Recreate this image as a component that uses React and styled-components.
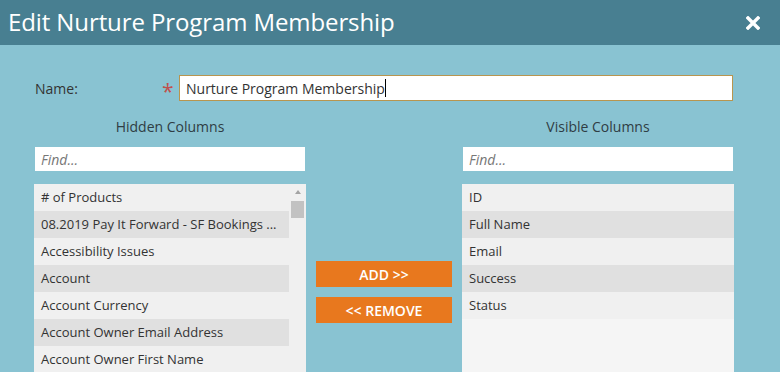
import React from 'react';
import styled, { createGlobalStyle } from 'styled-components';

const GlobalStyle = createGlobalStyle`
  html, body {
    margin: 0;
    padding: 0;
    background: #89c3d2;
    font-family: 'Open Sans', 'Liberation Sans', sans-serif;
    color: #333;
  }
`;

const Dialog = styled.div`
  width: 780px;
  height: 372px;
  overflow: hidden;
  background: #89c3d2;
`;

const Header = styled.div`
  height: 45px;
  background: #487f91;
  display: flex;
  align-items: center;
  justify-content: space-between;
  padding: 0 20px 0 8px;
`;

const Title = styled.h1`
  margin: 0 0 2px;
  font-size: 24px;
  font-weight: 400;
  color: #fff;
  letter-spacing: -0.1px;
`;

const Close = styled.button`
  border: 0;
  background: none;
  padding: 0;
  width: 14px;
  height: 14px;
  display: flex;
  cursor: pointer;
`;

const Body = styled.div`
  padding: 30px 0 0 34px;
`;

const NameRow = styled.div`
  display: flex;
  align-items: center;
  height: 26px;
`;

const Label = styled.label`
  flex-shrink: 0;
  width: 127px;
  padding-left: 1px;
  font-size: 14px;
`;

const Required = styled.span`
  flex-shrink: 0;
  width: 17px;
  color: #c0504d;
  font-size: 21px;
  line-height: 1;
  padding-top: 6px;
`;

const NameField = styled.div`
  box-sizing: border-box;
  flex-shrink: 0;
  width: 554px;
  height: 26px;
  border: 1px solid #b8954f;
  background: #fff;
  padding: 0 6px;
  display: flex;
  align-items: center;
  font-size: 14px;
  color: #333;
`;

const Caret = styled.span`
  width: 1px;
  height: 18px;
  background: #000;
`;

const Columns = styled.div`
  display: grid;
  grid-template-columns: 272px 156px 272px;
  margin-top: 17px;
`;

const Column = styled.div`
  display: flex;
  flex-direction: column;
`;

const Heading = styled.div`
  text-align: center;
  font-size: 14px;
  height: 18px;
  line-height: 18px;
  color: #2f3d44;
`;

const Find = styled.input`
  box-sizing: border-box;
  margin: 11px 1px 0;
  height: 24px;
  border: 0;
  padding: 0 6px;
  font-family: inherit;
  font-size: 14px;
  font-style: italic;
  outline: none;
  &::placeholder {
    color: #777;
  }
`;

const List = styled.div`
  margin-top: 13px;
  height: 200px;
  background: #f5f5f5;
  display: flex;
`;

const Rows = styled.div`
  flex: 1;
`;

const Row = styled.div`
  height: 27px;
  line-height: 27px;
  padding-left: 7px;
  font-size: 13px;
  color: #333;
  white-space: nowrap;
  background: ${(p) => (p.$alt ? '#e0e0e0' : '#f0f0f0')};
`;

const Scrollbar = styled.div`
  width: 17px;
  background: #f0f0f0;
  display: flex;
  flex-direction: column;
  align-items: center;
`;

const Arrow = styled.div`
  margin-top: 6px;
  width: 0;
  height: 0;
  border-left: 3px solid transparent;
  border-right: 3px solid transparent;
  border-bottom: 4px solid #a3a3a3;
`;

const Thumb = styled.div`
  margin-top: 7px;
  width: 13px;
  height: 17px;
  background: #c2c2c2;
`;

const Actions = styled.div`
  display: flex;
  flex-direction: column;
  gap: 10px;
  padding: 143px 10px 0;
`;

const Button = styled.button`
  height: 26px;
  border: 0;
  background: #e8781e;
  color: #fff;
  font-family: inherit;
  font-size: 14px;
  font-weight: 600;
  cursor: pointer;
`;

const hidden = [
  '# of Products',
  '08.2019 Pay It Forward - SF Bookings ...',
  'Accessibility Issues',
  'Account',
  'Account Currency',
  'Account Owner Email Address',
  'Account Owner First Name',
];

const visible = ['ID', 'Full Name', 'Email', 'Success', 'Status'];

export default function App() {
  return (
    <Dialog>
      <GlobalStyle />
      <Header>
        <Title>Edit Nurture Program Membership</Title>
        <Close aria-label="Close">
          <svg width="14" height="14" viewBox="0 0 14 14">
            <path d="M2 2L12 12M12 2L2 12" stroke="#fff" strokeWidth="3.4" strokeLinecap="square" />
          </svg>
        </Close>
      </Header>
      <Body>
        <NameRow>
          <Label>Name:</Label>
          <Required>*</Required>
          <NameField>
            Nurture Program Membership
            <Caret />
          </NameField>
        </NameRow>
        <Columns>
          <Column>
            <Heading>Hidden Columns</Heading>
            <Find placeholder="Find..." />
            <List>
              <Rows>
                {hidden.map((h, i) => (
                  <Row key={h} $alt={i % 2 === 1}>{h}</Row>
                ))}
              </Rows>
              <Scrollbar>
                <Arrow />
                <Thumb />
              </Scrollbar>
            </List>
          </Column>
          <Actions>
            <Button>ADD &gt;&gt;</Button>
            <Button>&lt;&lt; REMOVE</Button>
          </Actions>
          <Column>
            <Heading>Visible Columns</Heading>
            <Find placeholder="Find..." />
            <List>
              <Rows>
                {visible.map((v, i) => (
                  <Row key={v} $alt={i % 2 === 1}>{v}</Row>
                ))}
              </Rows>
            </List>
          </Column>
        </Columns>
      </Body>
    </Dialog>
  );
}
